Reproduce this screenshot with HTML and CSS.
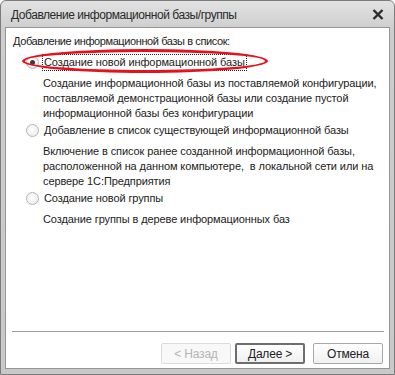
FILE: index.html
```html
<!DOCTYPE html>
<html lang="ru">
<head>
  <meta charset="UTF-8">
  <meta name="viewport" content="width=device-width, initial-scale=1.0">
  <title>Добавление информационной базы/группы</title>
  <link rel="stylesheet" href="styles.css">
</head>
<body>

<div class="window">
  <div class="titlebar">
    <span class="title">Добавление информационной базы/группы</span>
    <svg class="close" width="12" height="11" viewBox="0 0 12 11">
      <path d="M1.5 1 L10.5 10 M10.5 1 L1.5 10" stroke="#2b2b2b" stroke-width="2.4" fill="none"/>
    </svg>
  </div>

  <div class="content">
    <div class="heading">Добавление информационной базы в список:</div>

    <div class="option">
      <label class="radio-row">
        <span class="radio checked"></span>
        <span class="label focused">Создание новой информационной базы</span>
        <span class="mark"></span>
      </label>
      <div class="desc">Создание информационной базы из поставляемой конфигурации, поставляемой демонстрационной базы или создание пустой информационной базы без конфигурации</div>
    </div>

    <div class="option">
      <label class="radio-row">
        <span class="radio"></span>
        <span class="label">Добавление в список существующей информационной базы</span>
      </label>
      <div class="desc">Включение в список ранее созданной информационной базы, расположенной на данном компьютере,&nbsp; в локальной сети или на сервере 1С:Предприятия</div>
    </div>

    <div class="option">
      <label class="radio-row">
        <span class="radio"></span>
        <span class="label">Создание новой группы</span>
      </label>
      <div class="desc">Создание группы в дереве информационных баз</div>
    </div>

    <div class="footer">
      <div class="separator"></div>
      <div class="buttons">
        <button class="btn" disabled>&lt; Назад</button>
        <button class="btn default">Далее &gt;</button>
        <button class="btn cancel">Отмена</button>
      </div>
    </div>
  </div>
</div>

</body>
</html>
```

FILE: styles.css
```css
/* Окно мастера добавления базы */
body {
  margin: 0;
  font-family: "Liberation Sans", Arial, sans-serif;
  font-size: 11px;
  letter-spacing: -0.1px;
  color: #222;
  background: #fff;
}
.window {
  width: 395px;
  height: 375px;
  box-sizing: border-box;
  display: flex;
  flex-direction: column;
  border: 1px solid #7c7c7c;
  border-radius: 6px 6px 0 0;
  padding: 0 4px 5px 4px;
  background: linear-gradient(#e2e2e2, #cdcdcd 30px, #c9c9c9);
}
.titlebar {
  height: 26px;
  display: flex;
  align-items: center;
  justify-content: space-between;
  padding: 0 6px 0 6px;
}
.title {
  font-size: 12px;
  letter-spacing: -0.45px;
  color: #2a2a2a;
  margin-top: 1px;
}
.close {
  margin-top: 1px;
}
.content {
  flex: 1;
  display: flex;
  flex-direction: column;
  background: #fff;
  border: 1px solid #969696;
  padding: 6px 0 0 0;
}
.heading {
  line-height: 15px;
  padding-left: 7px;
  letter-spacing: -0.4px;
}
.option {
  padding-left: 20px;
}
.radio-row {
  position: relative;
  display: flex;
  align-items: center;
  height: 17px;
  margin-top: 5px;
}
.option + .option .radio-row {
  margin-top: 1px;
}
.radio {
  width: 11px;
  height: 11px;
  border: 1px solid #b4b4b4;
  border-radius: 50%;
  background: radial-gradient(circle at 40% 40%, #ffffff, #e6e6e6);
  margin-right: 3px;
  position: relative;
  flex: none;
}
.radio.checked::after {
  content: "";
  position: absolute;
  left: 3px;
  top: 3px;
  width: 5px;
  height: 5px;
  border-radius: 50%;
  background: #3a3a3a;
}
.label {
  line-height: 15px;
  padding: 0 1px;
  border: 1px dotted transparent;
}
.label.focused {
  border-color: #222;
}
.mark {
  position: absolute;
  left: -4px;
  top: -5px;
  width: 240px;
  height: 18px;
  border: 3px solid #e8101c;
  border-radius: 50%;
}
.desc {
  line-height: 15px;
  margin: 5px 2px 0 17px;
}
.footer {
  margin-top: auto;
  padding-bottom: 4px;
}
.separator {
  height: 1px;
  background: #a0a0a0;
  margin: 0 5px 0 6px;
}
.buttons {
  display: flex;
  justify-content: flex-end;
  gap: 4px;
  padding: 11px 6px 0 0;
}
.btn {
  width: 70px;
  height: 21px;
  box-sizing: border-box;
  font-family: inherit;
  font-size: 12px;
  letter-spacing: -0.2px;
  color: #222;
  border: 1px solid #a9a9a9;
  border-radius: 2px;
  background: linear-gradient(#ffffff, #f0f0f0);
  padding: 0;
}
.btn:disabled {
  color: #b4b4b4;
  border-color: #dcdcdc;
  background: #f8f8f8;
}
.btn.default {
  border: 2px solid #6e6e6e;
}
.btn.cancel {
  margin-left: 4px;
}
```
